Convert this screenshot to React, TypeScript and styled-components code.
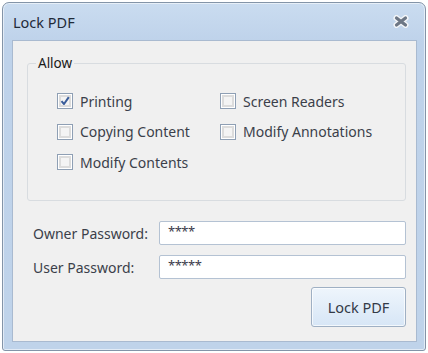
import {ReactElement} from "react";
import styled, {createGlobalStyle} from "styled-components";

const GlobalStyle = createGlobalStyle`
    body {
        margin: 0;
        background: #ffffff;
        font-family: "Noto Sans", "Open Sans", sans-serif;
    }
`;

const StyledWindow = styled.div`
    box-sizing: border-box;
    margin: 2px 0 0 2px;
    width: 424px;
    height: 349px;
    border: 1px solid #8394a8;
    border-radius: 7px 7px 3px 3px;
    background: linear-gradient(#cadcf0, #bed2ea 40px, #bfd3ea);
    box-shadow: inset 0 0 0 1px rgba(255, 255, 255, 0.55);
    padding: 0 8px 8px 9px;
    display: flex;
    flex-direction: column;
`;

const StyledTitleBar = styled.div`
    height: 37px;
    display: flex;
    align-items: center;
    justify-content: space-between;
    padding: 0 8px 0 1px;
`;

const StyledTitle = styled.span`
    font-size: 14.5px;
    color: #1f2a38;
`;

const StyledContent = styled.div`
    flex: 1;
    box-sizing: border-box;
    background: #f0f0f0;
    border: 1px solid #a9bad0;
    padding: 13px 10px 0 14px;
    display: flex;
    flex-direction: column;
`;

const StyledGroup = styled.fieldset`
    box-sizing: border-box;
    margin: 0;
    height: 147px;
    border: 1px solid #d8dce0;
    border-radius: 3px;
    padding: 0;
`;

const StyledLegend = styled.legend`
    font-size: 13.5px;
    color: #1a1a1a;
    padding: 0 2px;
    margin-left: 8px;
`;

const StyledOptions = styled.div`
    padding: 14px 0 0 29px;
    display: grid;
    grid-template-columns: 163px 1fr;
    grid-auto-rows: 30.5px;
`;

const StyledOption = styled.label`
    display: flex;
    align-items: center;
    gap: 7px;
    font-size: 14px;
    color: #3b3f4a;
`;

const StyledBox = styled.span`
    box-sizing: border-box;
    width: 16px;
    height: 16px;
    border: 1px solid #8e9fb4;
    background: #f4f4f4;
    box-shadow: inset 0 0 0 1px #ffffff, inset 0 0 0 3px #dcdcdc;
    display: flex;
    align-items: center;
    justify-content: center;
`;

const StyledFields = styled.div`
    margin-top: 20px;
    display: flex;
    flex-direction: column;
    gap: 10px;
    padding-left: 6px;
`;

const StyledRow = styled.div`
    display: flex;
    align-items: center;
`;

const StyledLabel = styled.span`
    width: 126px;
    font-size: 14px;
    color: #3b3f4a;
`;

const StyledInput = styled.div`
    box-sizing: border-box;
    flex: 1;
    height: 24px;
    background: #ffffff;
    border: 1px solid #b4c2d3;
    border-radius: 2px;
    padding: 1px 0 0 8px;
    font-size: 13px;
    line-height: 16px;
    color: #3a3a4a;
    letter-spacing: -0.5px;
`;

const StyledActions = styled.div`
    display: flex;
    justify-content: flex-end;
    margin-top: -2px;
`;

const StyledButton = styled.button`
    box-sizing: border-box;
    width: 95px;
    height: 40px;
    border: 1px solid #9fb0c4;
    border-radius: 3px;
    background: linear-gradient(#eef5fc, #d7e6f6);
    box-shadow: inset 0 0 0 1px rgba(255, 255, 255, 0.7);
    font-family: inherit;
    font-size: 14.5px;
    color: #333a47;
    padding: 0;
`;

const CheckMark = (): ReactElement => (
    <svg width="10" height="10" viewBox="0 0 10 10">
        <path d="M1.5 5.2 L4 8 L8.8 1.2" fill="none" stroke="#3a5d9a" strokeWidth="2" strokeLinejoin="round"/>
    </svg>
);

const CloseIcon = (): ReactElement => (
    <svg width="16" height="13" viewBox="0 0 16 13">
        <path d="M3.5 3 L12.5 10 M12.5 3 L3.5 10" stroke="#f4f6f9" strokeWidth="6" strokeLinecap="round"/>
        <path d="M3.5 3 L12.5 10 M12.5 3 L3.5 10" stroke="#6d7785" strokeWidth="3.2" strokeLinecap="round"/>
    </svg>
);

interface OptionProps {
    text: string;
    checked?: boolean;
}

const Option = (props: OptionProps): ReactElement => (
    <StyledOption>
        <StyledBox>{props.checked && <CheckMark/>}</StyledBox>
        {props.text}
    </StyledOption>
);

const App = (): ReactElement => {
    return (
        <>
            <GlobalStyle/>
            <StyledWindow>
                <StyledTitleBar>
                    <StyledTitle>Lock PDF</StyledTitle>
                    <CloseIcon/>
                </StyledTitleBar>
                <StyledContent>
                    <StyledGroup>
                        <StyledLegend>Allow</StyledLegend>
                        <StyledOptions>
                            <Option text="Printing" checked/>
                            <Option text="Screen Readers"/>
                            <Option text="Copying Content"/>
                            <Option text="Modify Annotations"/>
                            <Option text="Modify Contents"/>
                        </StyledOptions>
                    </StyledGroup>
                    <StyledFields>
                        <StyledRow>
                            <StyledLabel>Owner Password:</StyledLabel>
                            <StyledInput>****</StyledInput>
                        </StyledRow>
                        <StyledRow>
                            <StyledLabel>User Password:</StyledLabel>
                            <StyledInput>*****</StyledInput>
                        </StyledRow>
                        <StyledActions>
                            <StyledButton>Lock PDF</StyledButton>
                        </StyledActions>
                    </StyledFields>
                </StyledContent>
            </StyledWindow>
        </>
    );
};

export default App;
